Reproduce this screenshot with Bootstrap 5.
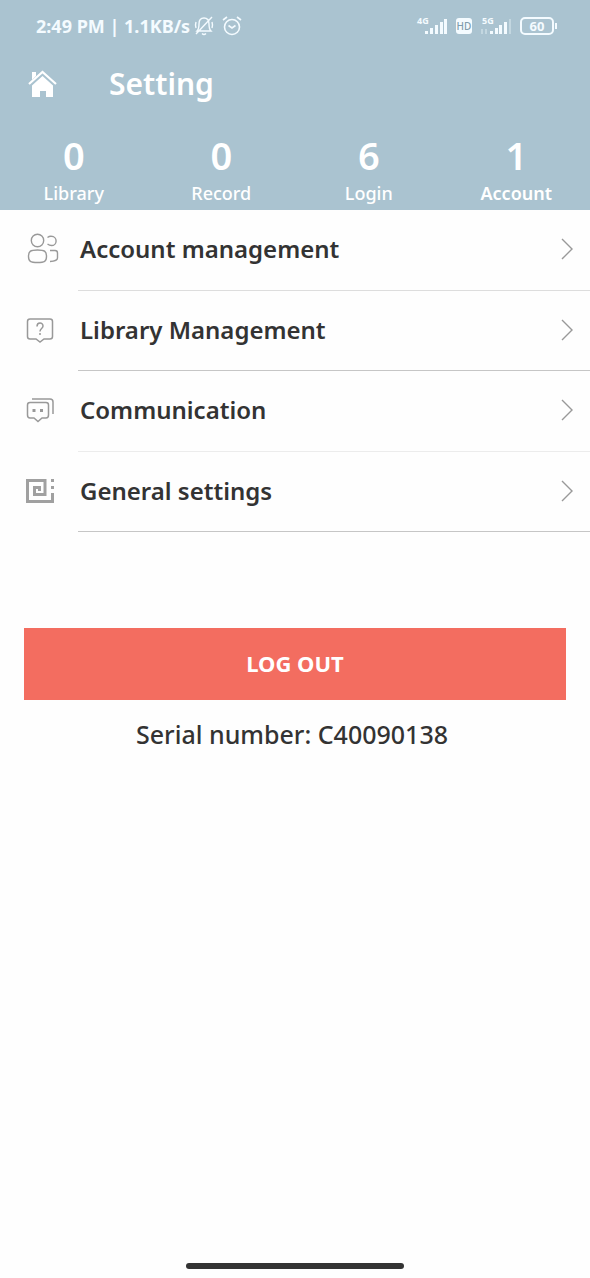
<!DOCTYPE html>
<html lang="en">
<head>
<meta charset="utf-8">
<meta name="viewport" content="width=device-width, initial-scale=1">
<title>Setting</title>
<link rel="stylesheet" href="https://cdn.jsdelivr.net/npm/bootstrap@5.3.0/dist/css/bootstrap.min.css">
<style>
  body { font-family: "Noto Sans", sans-serif; color: #333; background: #fefefe; }
  svg { flex: none; display: block; }
  .top-area { background: #aac3d0; color: #fff; }
  .status-bar { height: 52px; padding: 0 33px 0 36px; font-size: 18px; font-weight: 700; line-height: 24px; color: #f4fbff; }
  .title-bar { height: 64px; padding-left: 27px; gap: 51px; }
  .title-bar h1 { font-size: 30px; line-height: 40px; font-weight: 600; }
  .stats { height: 94px; padding-top: 17px; }
  .stat-value { font-size: 38px; line-height: 44px; font-weight: 600; }
  .stat-label { font-size: 18px; line-height: 24px; font-weight: 500; margin-top: 4px; }
  .stat-label.strong-label { font-weight: 600; }
  .menu { height: 322px; grid-auto-rows: 1fr; }
  .menu-link { color: #333; text-decoration: none; padding-left: 24px; }
  .menu-icon { width: 54px; padding-bottom: 2px; }
  .menu-body { font-size: 24px; line-height: 32px; font-weight: 600; padding: 0 16px 1px 2px; border-bottom: 1px solid #c6c6c6; }
  .menu-body.light-line { border-color: #ddd; }
  .menu-body.faint-line { border-color: #ececec; }
  .actions { padding: 96px 24px 0; }
  .btn-logout { --bs-btn-bg: #f36d60; --bs-btn-color: #fff; --bs-btn-hover-bg: #e66054; --bs-btn-hover-color: #fff; height: 72px; border: 0; padding: 0 0 2px; font-size: 22px; font-weight: 700; }
  .serial { font-size: 25px; line-height: 32px; font-weight: 500; padding: 18px 6px 0 0; }
  .home-pill { width: 218px; height: 6px; background: #333; margin-bottom: 9px; }
</style>
</head>
<body class="d-flex flex-column min-vh-100">
<header class="top-area">
  <div class="status-bar d-flex align-items-center justify-content-between">
    <div class="d-flex align-items-center">
      <span>2:49 PM | 1.1KB/s</span>
      <svg class="ms-1" width="20" height="22" viewBox="0 0 20 22" fill="none" stroke="currentColor" stroke-width="1.4"><path d="M3 16h14c-2-2-2-4-2-7 0-4-2-6-5-6S5 5 5 9c0 3 0 5-2 7zM8 18.500q2 2 4 0M18 2 2 19M2 7q-1 3 0 6M18 7q1 3 0 6"/></svg>
      <svg class="ms-2" width="20" height="22" viewBox="0 0 20 22" fill="none" stroke="currentColor" stroke-width="1.6"><circle cx="10" cy="12" r="7.500"/><path d="M1 5 5 2M19 5l-4-3M6.500 10.500 10 13l3.500-2.500"/></svg>
    </div>
    <div class="d-flex align-items-center">
      <svg width="32" height="22" viewBox="0 0 32 22" fill="currentColor"><text x="1" y="9" font-size="9" font-weight="700">4G</text><path d="M9 16h3v3H9zM14 13h3v6h-3zM19 10h3v9h-3zM24 7h3v12h-3zM28 4h3v15h-3z"/></svg>
      <svg class="ms-2" width="16" height="16" viewBox="0 0 16 16"><rect width="16" height="16" rx="3" fill="currentColor"/><text x="8" y="12" text-anchor="middle" font-size="10" font-weight="500" fill="#7f9dac">HD</text></svg>
      <svg class="ms-2" width="32" height="22" viewBox="0 0 32 22" fill="currentColor"><text x="2" y="9" font-size="9" font-weight="700">5G</text><path d="M10 16h3v3h-3zM15 13h3v6h-3zM19 10h3v9h-3zM24 7h3v12h-3z"/><path d="M29 4h2v15h-2zM1 14h2v5H1zM5 14h2v5H5z" opacity=".35"/></svg>
      <svg class="ms-2" width="37" height="18" viewBox="0 0 37 18"><rect x="1" y="1" width="32" height="16" rx="4" fill="none" stroke="currentColor" stroke-width="2"/><path d="M35 6h2v6h-2z" fill="currentColor"/><text x="17" y="14" text-anchor="middle" font-size="13" font-weight="700" fill="currentColor">60</text></svg>
    </div>
  </div>
  <div class="title-bar d-flex align-items-center">
    <a href="#" class="text-white" aria-label="Home"><svg width="31" height="28" viewBox="0 0 31 28"><path d="M5 2h4v4l-4 4z" fill="currentColor"/><path d="M2 14 15.500 2 29 14" fill="none" stroke="currentColor" stroke-width="2.200"/><path d="M15.500 6 26 15.500V27h-7v-6h-6v6H5V15.500z" fill="currentColor"/></svg></a>
    <h1 class="m-0">Setting</h1>
  </div>
  <div class="stats row g-0 text-center">
    <div class="col"><div class="stat-value">0</div><div class="stat-label">Library</div></div>
    <div class="col"><div class="stat-value">0</div><div class="stat-label">Record</div></div>
    <div class="col"><div class="stat-value">6</div><div class="stat-label">Login</div></div>
    <div class="col"><div class="stat-value">1</div><div class="stat-label strong-label">Account</div></div>
  </div>
</header>
<main class="flex-grow-1">
  <nav class="menu d-grid">
    <a href="#" class="menu-link d-flex">
      <span class="menu-icon d-flex align-items-center"><svg width="36" height="34" viewBox="0 0 36 34" fill="none" stroke="#999" stroke-width="1.400"><circle cx="13.500" cy="8.500" r="6.200"/><path d="M13.500 18c-7.500 0-9 1.500-9 6.500s2 6 9 6 9-1 9-6-1.500-6.500-9-6.500zM23.500 5.500q2-1.500 4-1.200a4.600 4.600 0 0 1 0 9.200q-2 0-4-1.500M26 18.500h5q2.500 0 2.500 2.500v5q0 3-7.500 3.500"/></svg></span>
      <span class="menu-body light-line d-flex flex-grow-1 align-items-center justify-content-between"><span>Account management</span><svg width="14" height="22" viewBox="0 0 14 22" fill="none" stroke="#999" stroke-width="1.400"><path d="m2 1 10 10L2 21"/></svg></span>
    </a>
    <a href="#" class="menu-link d-flex">
      <span class="menu-icon d-flex align-items-center"><svg width="32" height="28" viewBox="0 0 32 28" fill="none" stroke="#999" stroke-width="1.500"><path d="M6 3h20q2.500 0 2.500 2.500v15q0 2.500-2.500 2.500h-6l-4 3-4-3H6q-2.500 0-2.500-2.500v-15Q3.500 3 6 3z"/><path d="M13 10.500c0-4.500 6-4.500 6-.5 0 2.500-3 2.500-3 5.500M16 17v2"/></svg></span>
      <span class="menu-body d-flex flex-grow-1 align-items-center justify-content-between"><span>Library Management</span><svg width="14" height="22" viewBox="0 0 14 22" fill="none" stroke="#999" stroke-width="1.400"><path d="m2 1 10 10L2 21"/></svg></span>
    </a>
    <a href="#" class="menu-link d-flex">
      <span class="menu-icon d-flex align-items-center"><svg width="32" height="28" viewBox="0 0 32 28" fill="none" stroke="#999" stroke-width="1.500"><path d="M6 6.500h16q2.500 0 2.500 2.500v10q0 3-2.500 3h-4l-4 3.500-4-3.500H6q-2.500 0-2.500-3V9q0-2.500 2.500-2.500zM8 3h18q3 0 3 3v12"/><path d="M8.500 13h3v3h-3zM16 13h3v3h-3z" fill="#999" stroke="none"/></svg></span>
      <span class="menu-body faint-line d-flex flex-grow-1 align-items-center justify-content-between"><span>Communication</span><svg width="14" height="22" viewBox="0 0 14 22" fill="none" stroke="#999" stroke-width="1.400"><path d="m2 1 10 10L2 21"/></svg></span>
    </a>
    <a href="#" class="menu-link d-flex">
      <span class="menu-icon d-flex align-items-center"><svg width="32" height="26" viewBox="0 0 32 26" fill="none" stroke="#a0a0a0" stroke-width="3"><path d="M15.500 13V9.500h-5v7H21v-14H3.500v21h25V15"/><path d="M27 1h3v3h-3zM27 8h3v3h-3z" fill="#a0a0a0" stroke="none"/></svg></span>
      <span class="menu-body d-flex flex-grow-1 align-items-center justify-content-between"><span>General settings</span><svg width="14" height="22" viewBox="0 0 14 22" fill="none" stroke="#999" stroke-width="1.400"><path d="m2 1 10 10L2 21"/></svg></span>
    </a>
  </nav>
  <div class="actions text-center">
    <button type="button" class="btn btn-logout rounded-0 w-100">LOG OUT</button>
    <p class="serial m-0">Serial number: C40090138</p>
  </div>
</main>
<footer class="d-flex justify-content-center"><div class="home-pill rounded-pill"></div></footer>
<script src="https://cdn.jsdelivr.net/npm/bootstrap@5.3.0/dist/js/bootstrap.bundle.min.js"></script>
</body>
</html>
